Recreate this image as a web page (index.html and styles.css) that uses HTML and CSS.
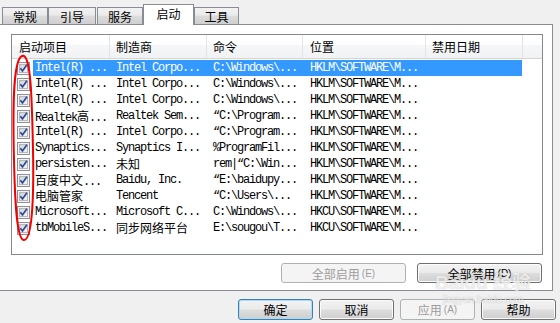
FILE: index.html
```html
<!DOCTYPE html>
<html>
<head>
<meta charset="utf-8">
<link rel="stylesheet" href="styles.css">
</head>
<body>
<svg class="defs" width="0" height="0">
  <defs>
    <linearGradient id="cbg" x1="0" y1="0" x2="1" y2="1">
      <stop offset="0" stop-color="#cdd1d7"/>
      <stop offset="1" stop-color="#f7f7f7"/>
    </linearGradient>
    <symbol id="cb" viewBox="0 0 13 13">
      <rect x=".5" y=".5" width="12" height="12" fill="#f4f4f4" stroke="#8e8f8f"/>
      <rect x="2.5" y="2.5" width="8" height="8" fill="url(#cbg)" stroke="#b3b7bd"/>
      <path d="M3.3 6.3 L5.5 8.9 L9.9 2.8" fill="none" stroke="#2c4a96" stroke-width="1.7"/>
    </symbol>
  </defs>
</svg>

<div class="tabs">
  <div class="tab t1">常规</div>
  <div class="tab t2">引导</div>
  <div class="tab t3">服务</div>
  <div class="tab tsel">启动</div>
  <div class="tab t5">工具</div>
</div>

<div class="panel">
  <div class="list">
    <div class="head">
      <div class="h h1">启动项目</div>
      <div class="h h2">制造商</div>
      <div class="h h3">命令</div>
      <div class="h h4">位置</div>
      <div class="h h5">禁用日期</div>
      <div class="h h6"></div>
    </div>
    <div class="rows">
      <div class="row"><div class="cbx"><svg width="13" height="13"><use href="#cb"/></svg></div><div class="cells on"><span class="c1">Intel(R) ...</span><span class="c2">Intel Corpo...</span><span class="c3">C:\Windows\...</span><span class="c4">HKLM\SOFTWARE\M...</span><span class="c5"></span></div></div>
      <div class="row"><div class="cbx"><svg width="13" height="13"><use href="#cb"/></svg></div><div class="cells"><span class="c1">Intel(R) ...</span><span class="c2">Intel Corpo...</span><span class="c3">C:\Windows\...</span><span class="c4">HKLM\SOFTWARE\M...</span><span class="c5"></span></div></div>
      <div class="row"><div class="cbx"><svg width="13" height="13"><use href="#cb"/></svg></div><div class="cells"><span class="c1">Intel(R) ...</span><span class="c2">Intel Corpo...</span><span class="c3">C:\Windows\...</span><span class="c4">HKLM\SOFTWARE\M...</span><span class="c5"></span></div></div>
      <div class="row"><div class="cbx"><svg width="13" height="13"><use href="#cb"/></svg></div><div class="cells"><span class="c1">Realtek<span class="k">高</span>...</span><span class="c2">Realtek Sem...</span><span class="c3">“C:\Program...</span><span class="c4">HKLM\SOFTWARE\M...</span><span class="c5"></span></div></div>
      <div class="row"><div class="cbx"><svg width="13" height="13"><use href="#cb"/></svg></div><div class="cells"><span class="c1">Intel(R) ...</span><span class="c2">Intel Corpo...</span><span class="c3">“C:\Program...</span><span class="c4">HKLM\SOFTWARE\M...</span><span class="c5"></span></div></div>
      <div class="row"><div class="cbx"><svg width="13" height="13"><use href="#cb"/></svg></div><div class="cells"><span class="c1">Synaptics...</span><span class="c2">Synaptics I...</span><span class="c3">%ProgramFil...</span><span class="c4">HKLM\SOFTWARE\M...</span><span class="c5"></span></div></div>
      <div class="row"><div class="cbx"><svg width="13" height="13"><use href="#cb"/></svg></div><div class="cells"><span class="c1">persisten...</span><span class="c2"><span class="k">未知</span></span><span class="c3">rem|“C:\Win...</span><span class="c4">HKLM\SOFTWARE\M...</span><span class="c5"></span></div></div>
      <div class="row"><div class="cbx"><svg width="13" height="13"><use href="#cb"/></svg></div><div class="cells"><span class="c1"><span class="k">百度中文</span>...</span><span class="c2">Baidu, Inc.</span><span class="c3">“E:\baidupy...</span><span class="c4">HKLM\SOFTWARE\M...</span><span class="c5"></span></div></div>
      <div class="row"><div class="cbx"><svg width="13" height="13"><use href="#cb"/></svg></div><div class="cells"><span class="c1"><span class="k">电脑管家</span></span><span class="c2">Tencent</span><span class="c3">“C:\Users\...</span><span class="c4">HKLM\SOFTWARE\M...</span><span class="c5"></span></div></div>
      <div class="row"><div class="cbx"><svg width="13" height="13"><use href="#cb"/></svg></div><div class="cells"><span class="c1">Microsoft...</span><span class="c2">Microsoft C...</span><span class="c3">C:\Windows\...</span><span class="c4">HKCU\SOFTWARE\M...</span><span class="c5"></span></div></div>
      <div class="row"><div class="cbx"><svg width="13" height="13"><use href="#cb"/></svg></div><div class="cells"><span class="c1">tbMobileS...</span><span class="c2"><span class="k">同步网络平台</span></span><span class="c3">E:\sougou\T...</span><span class="c4">HKCU\SOFTWARE\M...</span><span class="c5"></span></div></div>
    </div>
  </div>
  <div class="actions">
    <div class="btn dis wide">全部启用 <span class="acc">(E)</span></div>
    <div class="btn wide">全部禁用 <span class="acc">(D)</span></div>
  </div>
</div>

<div class="footer">
  <div class="btn def">确定</div>
  <div class="btn">取消</div>
  <div class="btn dis">应用 <span class="acc">(A)</span></div>
  <div class="btn">帮助</div>
</div>

<svg class="oval" width="60" height="260" viewBox="0 0 60 260">
  <path d="M22 56 C12 60 13 120 14 160 C15 205 17 240 24 240 C32 240 34 200 33 150 C32 100 31 52 22 56 Z" fill="none" stroke="#f00000" stroke-width="2"/>
</svg>

<div class="mark">
  <div class="mark-top">Bai<span class="paw">du</span> 经验</div>
  <div class="mark-url">jingyan.baidu.com</div>
</div>
</body>
</html>
```

FILE: styles.css
```css
html, body {
  margin: 0;
  padding: 0;
}
body {
  width: 560px;
  height: 323px;
  overflow: hidden;
  position: relative;
  background: #f0f0f0;
  font-family: "Noto Sans CJK SC", "Liberation Sans", sans-serif;
  font-size: 12px;
  color: #000;
}
.defs {
  position: absolute;
  width: 0;
  height: 0;
}

/* tabs */
.tabs {
  display: flex;
  align-items: flex-end;
  height: 24px;
  padding-left: 2px;
}
.tab {
  box-sizing: border-box;
  height: 17px;
  border: 1px solid #898c95;
  border-bottom: none;
  background: linear-gradient(#f2f2f2 0%, #ebebeb 45%, #dcdcdc 50%, #cfcfcf 100%);
  display: flex;
  align-items: center;
  justify-content: center;
  line-height: 14px;
  padding-top: 1px;
}
.t1 { width: 46px; }
.t2 { width: 48px; }
.t3 { width: 46px; margin-left: 1px; }
.tsel {
  width: 51px;
  height: 21px;
  margin-bottom: -1px;
  background: #fff;
  position: relative;
  z-index: 1;
  padding-top: 0;
  padding-bottom: 3px;
}
.t5 { width: 45px; }

/* panel */
.panel {
  box-sizing: border-box;
  width: 554px;
  height: 267px;
  margin-left: -1px;
  border: 1px solid #898c95;
  background: #fff;
  padding: 9px 9px 7px 11px;
}
.list {
  box-sizing: border-box;
  width: 532px;
  height: 221px;
  border: 1px solid #828790;
  background: #fff;
}
.head {
  display: flex;
  height: 24px;
  box-sizing: border-box;
  border-bottom: 1px solid #d5d5d5;
  background: linear-gradient(#ffffff 0%, #ffffff 40%, #f6f7f8 45%, #f1f2f4 100%);
}
.h {
  box-sizing: border-box;
  height: 23px;
  line-height: 23px;
  border-right: 1px solid #e3e4e6;
  padding-left: 6px;
  white-space: nowrap;
}
.h1 { width: 98px; padding-left: 7px; }
.h2 { width: 97px; }
.h3 { width: 96px; }
.h4 { width: 123px; padding-left: 7px; }
.h5 { width: 97px; }
.h6 { width: 19px; border-right: none; }

.rows {
  padding-top: 1px;
}
.row {
  display: flex;
  height: 16px;
  line-height: 16px;
}
.cbx {
  box-sizing: border-box;
  width: 21px;
  padding-left: 5px;
  display: flex;
  align-items: center;
}
.cbx svg {
  display: block;
}
.cells {
  display: flex;
  font-family: "Liberation Mono", "Noto Sans CJK SC", monospace;
  font-size: 12px;
  letter-spacing: -1.2px;
  white-space: nowrap;
}
.cells.on {
  background: #3399ff;
  color: #fff;
}
.cells > span {
  box-sizing: border-box;
  display: block;
  overflow: hidden;
}
.c1 { width: 77px; padding-left: 2px; }
.c2 { width: 97px; padding-left: 6px; }
.c3 { width: 96px; padding-left: 6px; }
.c4 { width: 123px; padding-left: 7px; }
.c5 { width: 96px; }
.k {
  font-family: "Noto Sans CJK SC", sans-serif;
  letter-spacing: 0;
}

/* buttons */
.actions {
  display: flex;
  justify-content: flex-end;
  gap: 11px;
  margin-top: 8px;
  width: 531px;
}
.btn {
  box-sizing: border-box;
  width: 75px;
  height: 21px;
  border: 1px solid #707070;
  border-radius: 3px;
  background: linear-gradient(#f2f2f2 0%, #ebebeb 48%, #dddddd 52%, #cfcfcf 100%);
  box-shadow: inset 0 0 0 1px #fbfbfb;
  display: flex;
  align-items: center;
  justify-content: center;
  white-space: nowrap;
}
.btn.wide {
  width: 125px;
  height: 20px;
}
.btn.dis {
  border-color: #adb2b5;
  background: #f4f4f4;
  box-shadow: none;
  color: #9c9c9c;
}
.btn.def {
  border-color: #3c7fb1;
  box-shadow: inset 0 0 0 1px #a9ddf6;
}
.acc {
  font-family: "Liberation Sans", sans-serif;
  font-size: 10px;
  margin-left: 2px;
}

.footer {
  display: flex;
  gap: 6px;
  padding-left: 238px;
  margin-top: 8px;
}

/* overlays */
.oval {
  position: absolute;
  left: 0;
  top: 0;
}
.mark {
  position: absolute;
  left: 428px;
  top: 272px;
  width: 110px;
  text-align: center;
  color: rgba(255, 255, 255, 0.75);
  text-shadow: 0 0 1px rgba(120, 120, 120, 0.5);
  pointer-events: none;
}
.mark-top {
  font-family: "Liberation Sans", "Noto Sans CJK SC", sans-serif;
  font-size: 19px;
  font-weight: bold;
  line-height: 22px;
}
.mark-url {
  font-family: "Liberation Sans", sans-serif;
  font-size: 10px;
  line-height: 12px;
}
```
